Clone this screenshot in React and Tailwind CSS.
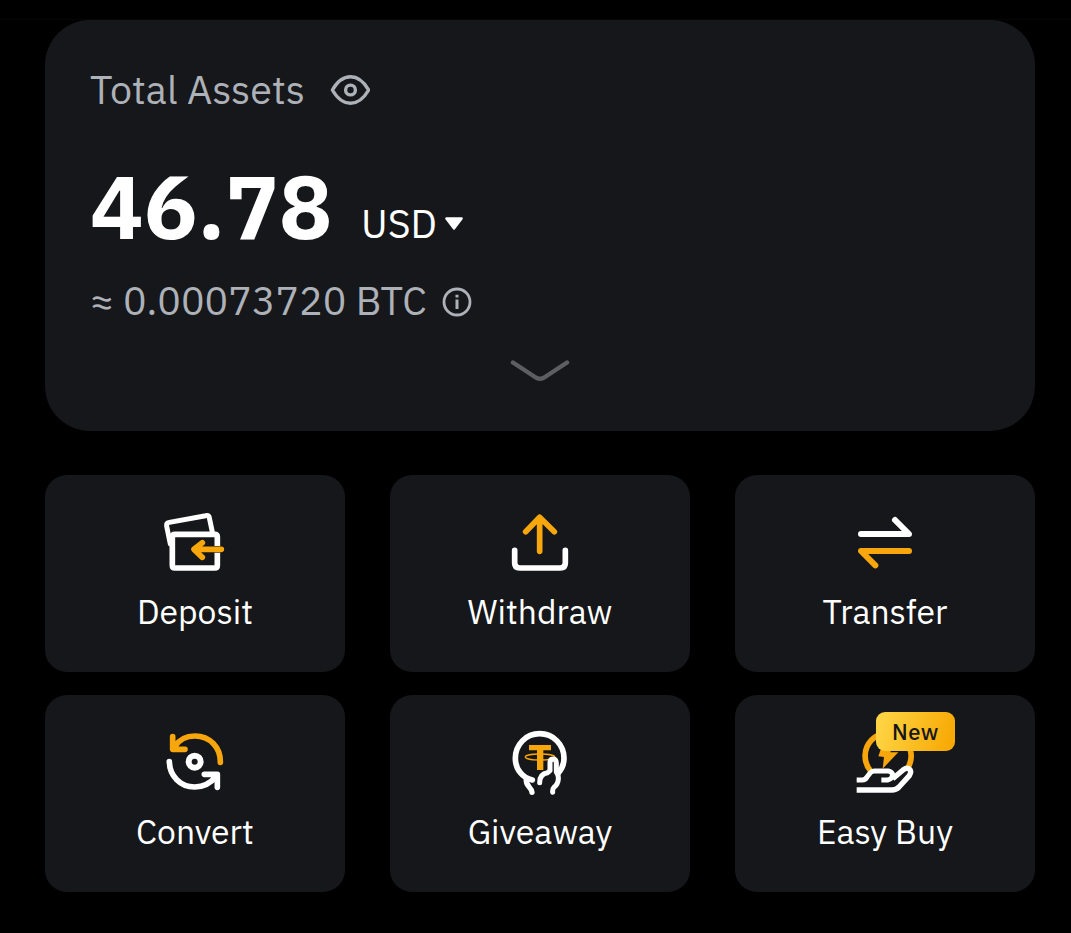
const DepositIcon = () => (
  <svg className="w-[90px] h-20" viewBox="0 0 270 240" fill="none" strokeLinecap="round" strokeLinejoin="round">
    <path d="M61 132 50 79Q48 69 58 67L167 47Q176 45 178 53L187 96" stroke="#fff" strokeWidth="15" />
    <path d="M202 138V111Q202 103 194 103H75Q67 103 67 111V196Q67 204 75 204H194Q202 204 202 196V158" stroke="#fff" strokeWidth="17" strokeLinecap="butt" />
    <path d="M214 148H134M157 128 132 148 157 172" stroke="#f7a60c" strokeWidth="17" />
  </svg>
);

const WithdrawIcon = () => (
  <svg className="w-[90px] h-20" viewBox="0 0 270 240" fill="none" strokeWidth="17" strokeLinecap="round" strokeLinejoin="round">
    <path d="M59 151V189Q59 204 74 204H196Q211 204 211 189V151" stroke="#fff" />
    <path d="M134 154V54M92 95 134 52 178 95" stroke="#f7a60c" />
  </svg>
);

const TransferIcon = () => (
  <svg className="w-[90px] h-20" viewBox="0 0 270 240" fill="none" strokeWidth="18" strokeLinecap="round" strokeLinejoin="round">
    <path d="M63 102H207L165 60" stroke="#fff" />
    <path d="M207 153H63L106 196" stroke="#f7a60c" />
  </svg>
);

const ConvertIcon = () => (
  <svg className="w-[90px] h-20" viewBox="0 0 270 240" fill="none" strokeWidth="17" strokeLinecap="round" strokeLinejoin="round">
    <path d="M211 127C212 82 179 48 135 48C111 48 88 58 74 80M68 50V88H105" stroke="#f7a60c" />
    <path d="M58 125C59 168 91 201 134 201C160 201 182 190 198 169M163 163H202V202" stroke="#fff" />
    <circle cx="134" cy="125" r="18" stroke="#fff" strokeWidth="18" />
  </svg>
);

const GiveawayIcon = () => (
  <svg className="w-[90px] h-20" viewBox="0 0 270 240" fill="none" strokeLinecap="round" strokeLinejoin="round">
    <path d="M102 75H168V91H145V150H126V91H102Z" fill="#f7a60c" />
    <ellipse cx="135" cy="111" rx="44" ry="9" stroke="#f7a60c" strokeWidth="4" />
    <path d="M163 137V122Q168 114 177 117Q184 120 184 132V164L165 180Z" fill="#16171a" />
    <path d="M112 180C83 174 61 148 61 115C61 74 93 41 134 41C175 41 207 74 207 115C207 133 201 147 189 160" stroke="#fff" strokeWidth="17" />
    <path d="M94 177C90 199 111 202 111 217" stroke="#fff" strokeWidth="16" />
    <path d="M134 188C134 169 143 160 158 158L165 152V126Q166 117 175 117Q183 118 184 128V156Q191 164 190 177Q189 193 177 202Q172 207 173 217" stroke="#fff" strokeWidth="15" />
  </svg>
);

const EasyBuyIcon = () => (
  <svg className="w-[90px] h-20" viewBox="0 0 270 240" fill="none" strokeLinejoin="round">
    <path d="M92 153A69 69 0 1 1 202 146" stroke="#f7a60c" strokeWidth="17" />
    <path d="M125 80 115 109 132 111 128 146 175 97H151L157 80Z" fill="#f7a60c" />
    <path d="M50 180H67Q76 180 81 171L91 158Q95 153 103 153H145Q156 155 158 164Q157 177 143 180H124" stroke="#fff" strokeWidth="15" />
    <path d="M158 176 190 149Q202 141 210 149Q215 155 208 167L177 201Q168 210 156 210H50" stroke="#fff" strokeWidth="16" />
  </svg>
);

const actions = [
  { label: "Deposit", icon: DepositIcon },
  { label: "Withdraw", icon: WithdrawIcon },
  { label: "Transfer", icon: TransferIcon },
  { label: "Convert", icon: ConvertIcon },
  { label: "Giveaway", icon: GiveawayIcon },
  { label: "Easy Buy", icon: EasyBuyIcon, badge: "New" },
];

const App = () => {
  return (
    <div className="w-[1071px] h-[933px] bg-black text-white overflow-hidden font-['IBM_Plex_Sans',Roboto,sans-serif]">
      <div className="h-5 border-b border-[#060607]"></div>
      <div className="pl-[45px] pr-9">
        <div className="h-[411px] bg-[#16171a] rounded-[45px] px-[45px] pt-[45px] flex flex-col">
          <div className="flex items-center h-[50px] text-[#adb1b8]">
            <span className="w-[240px] text-[39.4px] leading-[50px] whitespace-nowrap">Total Assets</span>
            <svg className="w-10 h-8" viewBox="0 0 40 32" fill="none" stroke="currentColor" strokeWidth="3.4" strokeLinejoin="round">
              <path d="M2.4 16C7 8 13 2.8 20.5 2.8S34 8 38.6 16C34 24 28 29.2 20.5 29.2S7 24 2.4 16Z" />
              <circle cx="20.5" cy="16" r="4.9" />
            </svg>
          </div>

          <div className="flex items-end mt-[41px] h-[100px]">
            <span className="w-[271px] text-[89.5px] leading-[100px] font-bold whitespace-nowrap">46.78</span>
            <span className="w-[83px] pb-[7px] text-[39.4px] leading-[50px]">USD</span>
            <svg className="w-5 h-[22px] mb-[25px]" viewBox="0 0 20 22" fill="#fff" stroke="#fff" strokeWidth="2.4" strokeLinejoin="round">
              <path d="M2.4 9.5H17.6L10 19.5Z" />
            </svg>
          </div>

          <div className="flex items-center mt-[21px] h-[50px] text-[#adb1b8]">
            <span className="w-[352px] pb-0.5 text-[39.4px] leading-[50px] whitespace-nowrap">≈ 0.00073720 BTC</span>
            <svg className="w-[30px] h-[30px]" viewBox="0 0 30 30" fill="none" stroke="currentColor" strokeWidth="2.8">
              <circle cx="15" cy="15" r="13" />
              <path d="M15 12.5V22M15 7.8V10.6" strokeWidth="3" />
            </svg>
          </div>

          <svg className="w-[60px] h-6 self-center mt-[31px]" viewBox="0 0 60 24" fill="none" stroke="#5d5e62" strokeWidth="4.4" strokeLinecap="round" strokeLinejoin="round">
            <path d="M3 4.5 25 19Q30 22.5 35 19L57 4.5" />
          </svg>
        </div>

        <div className="grid grid-cols-3 gap-x-[45px] gap-y-[23px] mt-11">
          {actions.map(({ label, icon: Icon, badge }) => (
            <div key={label} className="relative h-[197px] bg-[#16171a] rounded-[22px] pt-[25px] flex flex-col items-center">
              <Icon />
              <span className="mt-[11px] text-[33.7px] leading-[40px] whitespace-nowrap">{label}</span>
              {badge && (
                <span className="absolute left-[141px] top-[17px] w-[79px] h-[39px] rounded-[9px] flex items-center justify-center bg-[linear-gradient(105deg,#ffd748,#f7a600)] text-[#16171a] text-[22px] font-medium tracking-[0.5px]">
                  {badge}
                </span>
              )}
            </div>
          ))}
        </div>
      </div>
    </div>
  );
};

export default App;
